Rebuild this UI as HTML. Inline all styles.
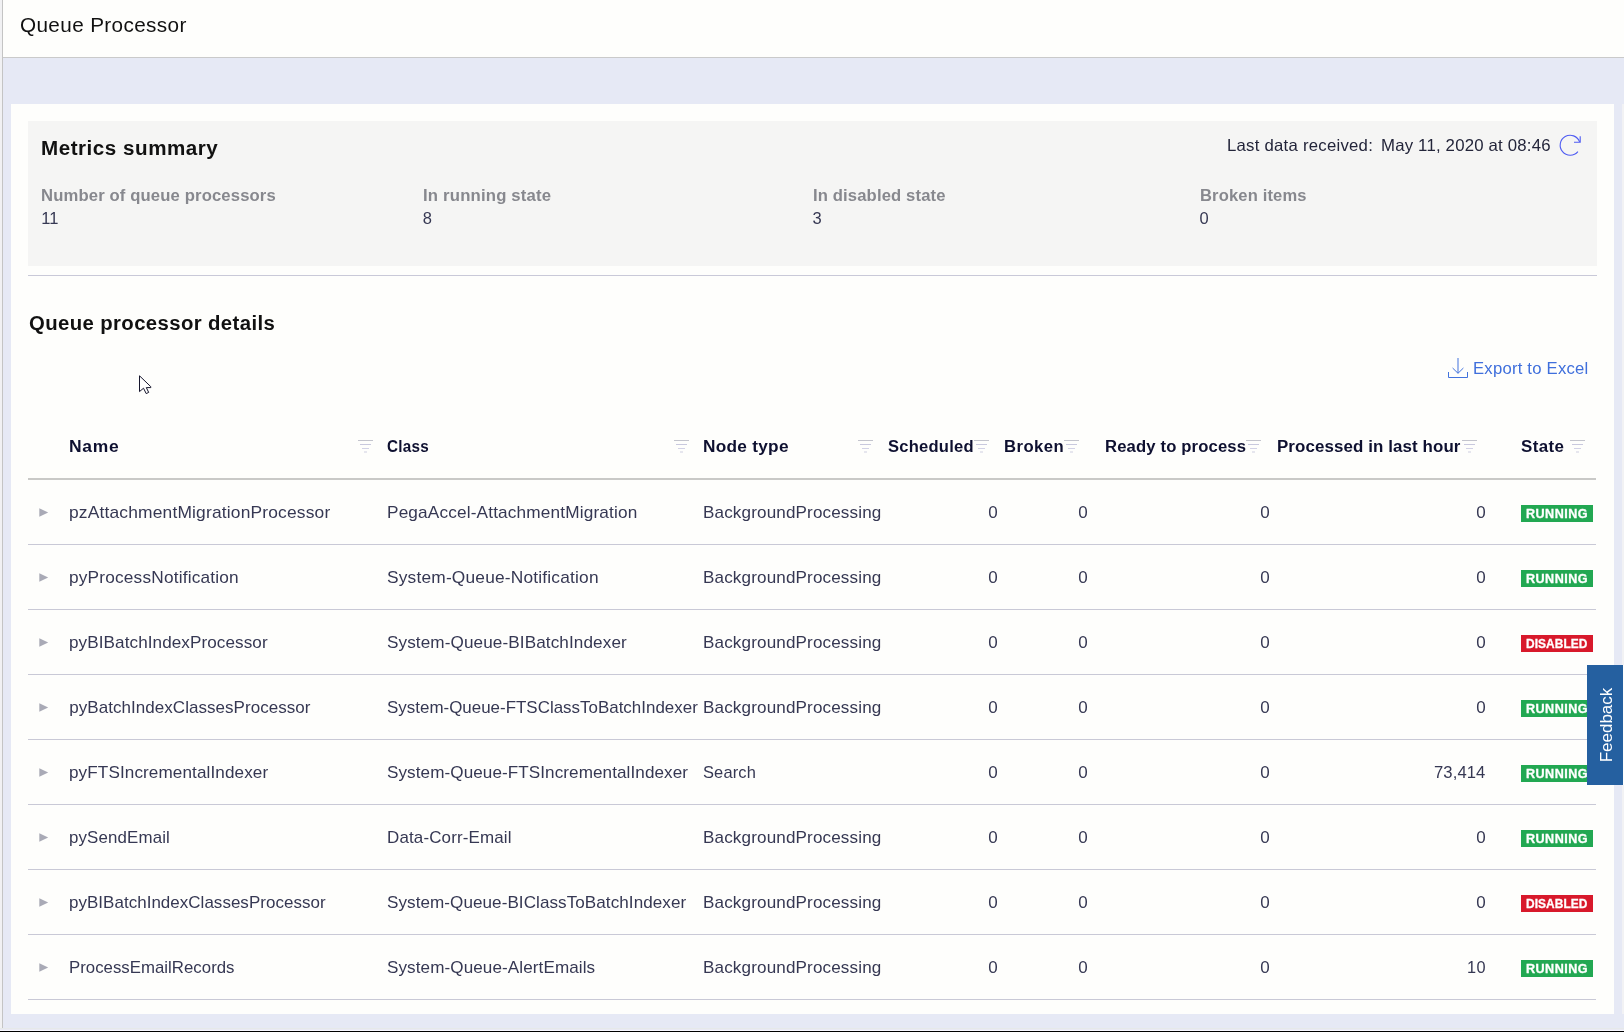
<!DOCTYPE html>
<html><head><meta charset="utf-8"><title>Queue Processor</title>
<style>
html,body{margin:0;padding:0}
body{width:1624px;height:1032px;overflow:hidden;position:relative;background:#e6e9f5;font-family:"Liberation Sans", sans-serif;}
#w{position:absolute;left:0;top:0;width:1624px;height:1032px;will-change:transform}
.abs,.t,.f,.rl,.ar,.b{position:absolute}
.t{white-space:pre;line-height:1;transform-origin:0 0}
.f{height:1px}
.rl{left:28px;width:1568px;height:1px;background:#c9c9d6}
.ar{left:39.3px}
.b{left:1521px;width:72px;height:17px;}
.b span{position:absolute;left:0;width:72px;text-align:center;top:3.2px;font-size:12px;line-height:1;font-weight:700;color:#fff;letter-spacing:0.55px;text-indent:0.55px}
</style></head><body>
<div id="w">
<div class="abs" style="left:0;top:0;width:2px;height:1032px;background:#f1f1f3"></div>
<div class="abs" style="left:2px;top:0;width:1px;height:1032px;background:#c4c4c4"></div>
<div class="abs" style="left:3px;top:0;width:1621px;height:57px;background:#fefefc"></div>
<div class="abs" style="left:3px;top:57px;width:1621px;height:1px;background:#cacaca"></div>
<div class="abs" style="left:11px;top:104px;width:1603px;height:910px;background:#fefefc"></div>
<div class="abs" style="left:1622px;top:104px;width:2px;height:910px;background:#f2f2f4"></div>
<div class="abs" style="left:28px;top:121px;width:1569px;height:145px;background:#f5f5f4"></div>
<div class="abs" style="left:28px;top:275px;width:1569px;height:1px;background:#c9c9d8"></div>
<div class="abs" style="left:28px;top:478px;width:1568px;height:2px;background:#c9c9c7"></div>
<div class="rl" style="top:544px"></div><div class="rl" style="top:609px"></div><div class="rl" style="top:674px"></div><div class="rl" style="top:739px"></div><div class="rl" style="top:804px"></div><div class="rl" style="top:869px"></div><div class="rl" style="top:934px"></div><div class="rl" style="top:999px"></div>
<div class="f" style="left:358px;top:440px;width:15px;background:#c3c4cd"></div><div class="f" style="left:360px;top:444px;width:11px;background:#c9c9de"></div><div class="f" style="left:362px;top:448px;width:7px;background:#d2d2e6"></div><div class="f" style="left:364px;top:451px;width:3px;height:2px;background:#e6e6ee"></div><div class="f" style="left:674px;top:440px;width:15px;background:#c3c4cd"></div><div class="f" style="left:676px;top:444px;width:11px;background:#c9c9de"></div><div class="f" style="left:678px;top:448px;width:7px;background:#d2d2e6"></div><div class="f" style="left:680px;top:451px;width:3px;height:2px;background:#e6e6ee"></div><div class="f" style="left:858px;top:440px;width:15px;background:#c3c4cd"></div><div class="f" style="left:860px;top:444px;width:11px;background:#c9c9de"></div><div class="f" style="left:862px;top:448px;width:7px;background:#d2d2e6"></div><div class="f" style="left:864px;top:451px;width:3px;height:2px;background:#e6e6ee"></div><div class="f" style="left:974px;top:440px;width:15px;background:#c3c4cd"></div><div class="f" style="left:976px;top:444px;width:11px;background:#c9c9de"></div><div class="f" style="left:978px;top:448px;width:7px;background:#d2d2e6"></div><div class="f" style="left:980px;top:451px;width:3px;height:2px;background:#e6e6ee"></div><div class="f" style="left:1064px;top:440px;width:15px;background:#c3c4cd"></div><div class="f" style="left:1066px;top:444px;width:11px;background:#c9c9de"></div><div class="f" style="left:1068px;top:448px;width:7px;background:#d2d2e6"></div><div class="f" style="left:1070px;top:451px;width:3px;height:2px;background:#e6e6ee"></div><div class="f" style="left:1246px;top:440px;width:15px;background:#c3c4cd"></div><div class="f" style="left:1248px;top:444px;width:11px;background:#c9c9de"></div><div class="f" style="left:1250px;top:448px;width:7px;background:#d2d2e6"></div><div class="f" style="left:1252px;top:451px;width:3px;height:2px;background:#e6e6ee"></div><div class="f" style="left:1462px;top:440px;width:15px;background:#c3c4cd"></div><div class="f" style="left:1464px;top:444px;width:11px;background:#c9c9de"></div><div class="f" style="left:1466px;top:448px;width:7px;background:#d2d2e6"></div><div class="f" style="left:1468px;top:451px;width:3px;height:2px;background:#e6e6ee"></div><div class="f" style="left:1570px;top:440px;width:15px;background:#c3c4cd"></div><div class="f" style="left:1572px;top:444px;width:11px;background:#c9c9de"></div><div class="f" style="left:1574px;top:448px;width:7px;background:#d2d2e6"></div><div class="f" style="left:1576px;top:451px;width:3px;height:2px;background:#e6e6ee"></div>
<svg class="ar" style="top:508.0px" width="10" height="10" viewBox="0 0 10 10"><path d="M0.3,0.3 L9.2,4.5 L0.3,8.7 Z" fill="#a9aab6"/></svg><svg class="ar" style="top:573.0px" width="10" height="10" viewBox="0 0 10 10"><path d="M0.3,0.3 L9.2,4.5 L0.3,8.7 Z" fill="#a9aab6"/></svg><svg class="ar" style="top:638.0px" width="10" height="10" viewBox="0 0 10 10"><path d="M0.3,0.3 L9.2,4.5 L0.3,8.7 Z" fill="#a9aab6"/></svg><svg class="ar" style="top:703.0px" width="10" height="10" viewBox="0 0 10 10"><path d="M0.3,0.3 L9.2,4.5 L0.3,8.7 Z" fill="#a9aab6"/></svg><svg class="ar" style="top:768.0px" width="10" height="10" viewBox="0 0 10 10"><path d="M0.3,0.3 L9.2,4.5 L0.3,8.7 Z" fill="#a9aab6"/></svg><svg class="ar" style="top:833.0px" width="10" height="10" viewBox="0 0 10 10"><path d="M0.3,0.3 L9.2,4.5 L0.3,8.7 Z" fill="#a9aab6"/></svg><svg class="ar" style="top:898.0px" width="10" height="10" viewBox="0 0 10 10"><path d="M0.3,0.3 L9.2,4.5 L0.3,8.7 Z" fill="#a9aab6"/></svg><svg class="ar" style="top:963.0px" width="10" height="10" viewBox="0 0 10 10"><path d="M0.3,0.3 L9.2,4.5 L0.3,8.7 Z" fill="#a9aab6"/></svg>
<div class="b" style="top:505px;background:#22a852"></div><div class="b" style="top:570px;background:#22a852"></div><div class="b" style="top:635px;background:#d8192b"></div><div class="b" style="top:700px;background:#22a852"></div><div class="b" style="top:765px;background:#22a852"></div><div class="b" style="top:830px;background:#22a852"></div><div class="b" style="top:895px;background:#d8192b"></div><div class="b" style="top:960px;background:#22a852"></div>
<div class="t" style="left:20.00px;top:15px;font-size:20px;color:#111111;letter-spacing:0.348px;transform:scaleX(1.0361);">Queue Processor</div><div class="t" style="left:40.79px;top:139px;font-size:19.5px;color:#111111;font-weight:700;letter-spacing:0.497px;transform:scaleX(1.0564);">Metrics summary</div><div class="t" style="left:1226.68px;top:137px;font-size:16.5px;color:#23253a;letter-spacing:0.235px;transform:scaleX(1.0150);">Last data received:</div><div class="t" style="left:1381.18px;top:137px;font-size:16.5px;color:#23253a;letter-spacing:0.186px;transform:scaleX(1.0170);">May 11, 2020 at 08:46</div><div class="t" style="left:41.30px;top:187px;font-size:16.5px;color:#87888e;font-weight:700;letter-spacing:0.127px;transform:scaleX(1.0101);">Number of queue processors</div><div class="t" style="left:41.34px;top:210px;font-size:16.5px;color:#363853;">11</div><div class="t" style="left:423.10px;top:187px;font-size:16.5px;color:#87888e;font-weight:700;letter-spacing:0.175px;transform:scaleX(1.0138);">In running state</div><div class="t" style="left:422.81px;top:210px;font-size:16.5px;color:#363853;">8</div><div class="t" style="left:813.30px;top:187px;font-size:16.5px;color:#87888e;font-weight:700;letter-spacing:0.136px;transform:scaleX(1.0074);">In disabled state</div><div class="t" style="left:812.62px;top:210px;font-size:16.5px;color:#363853;">3</div><div class="t" style="left:1199.70px;top:187px;font-size:16.5px;color:#87888e;font-weight:700;letter-spacing:0.160px;transform:scaleX(1.0020);">Broken items</div><div class="t" style="left:1199.60px;top:210px;font-size:16.5px;color:#363853;">0</div><div class="t" style="left:28.50px;top:314px;font-size:19.5px;color:#111111;font-weight:700;letter-spacing:0.363px;transform:scaleX(1.0433);">Queue processor details</div><div class="t" style="left:1473.29px;top:360px;font-size:16.5px;color:#3f6fdc;letter-spacing:0.214px;transform:scaleX(1.0110);">Export to Excel</div><div class="t" style="left:69.00px;top:439px;font-size:16px;color:#0e1030;font-weight:700;letter-spacing:0.642px;transform:scaleX(1.0913);">Name</div><div class="t" style="left:387.36px;top:439px;font-size:16px;color:#0e1030;font-weight:700;letter-spacing:0.284px;transform:scaleX(0.9515);">Class</div><div class="t" style="left:703.10px;top:439px;font-size:16px;color:#0e1030;font-weight:700;letter-spacing:0.250px;transform:scaleX(1.0775);">Node type</div><div class="t" style="left:887.60px;top:439px;font-size:16px;color:#0e1030;font-weight:700;letter-spacing:0.228px;transform:scaleX(1.0344);">Scheduled</div><div class="t" style="left:1003.50px;top:439px;font-size:16px;color:#0e1030;font-weight:700;letter-spacing:0.429px;transform:scaleX(1.0420);">Broken</div><div class="t" style="left:1104.50px;top:439px;font-size:16px;color:#0e1030;font-weight:700;letter-spacing:0.144px;transform:scaleX(1.0405);">Ready to process</div><div class="t" style="left:1277.20px;top:439px;font-size:16px;color:#0e1030;font-weight:700;letter-spacing:0.098px;transform:scaleX(1.0561);">Processed in last hour</div><div class="t" style="left:1521.08px;top:439px;font-size:16px;color:#0e1030;font-weight:700;letter-spacing:0.381px;transform:scaleX(1.0569);">State</div><div class="t" style="left:69.30px;top:504px;font-size:17px;color:#363853;letter-spacing:0.170px;transform:scaleX(1.0230);">pzAttachmentMigrationProcessor</div><div class="t" style="left:387.24px;top:504px;font-size:17px;color:#363853;letter-spacing:0.153px;transform:scaleX(1.0127);">PegaAccel-AttachmentMigration</div><div class="t" style="left:703.25px;top:504px;font-size:17px;color:#363853;letter-spacing:0.145px;transform:scaleX(1.0040);">BackgroundProcessing</div><div class="t" style="left:988.17px;top:504px;font-size:17px;color:#363853;">0</div><div class="t" style="left:1078.17px;top:504px;font-size:17px;color:#363853;">0</div><div class="t" style="left:1260.37px;top:504px;font-size:17px;color:#363853;">0</div><div class="t" style="left:1476.37px;top:504px;font-size:17px;color:#363853;">0</div><div class="t" style="left:1526.14px;top:508px;font-size:12px;color:#ffffff;font-weight:700;letter-spacing:0.443px;transform:scaleX(1.0493);-webkit-text-stroke:0.3px #fff;">RUNNING</div><div class="t" style="left:69.30px;top:569px;font-size:17px;color:#363853;letter-spacing:0.182px;transform:scaleX(1.0155);">pyProcessNotification</div><div class="t" style="left:386.50px;top:569px;font-size:17px;color:#363853;letter-spacing:0.184px;transform:scaleX(1.0191);">System-Queue-Notification</div><div class="t" style="left:703.25px;top:569px;font-size:17px;color:#363853;letter-spacing:0.145px;transform:scaleX(1.0040);">BackgroundProcessing</div><div class="t" style="left:988.17px;top:569px;font-size:17px;color:#363853;">0</div><div class="t" style="left:1078.17px;top:569px;font-size:17px;color:#363853;">0</div><div class="t" style="left:1260.37px;top:569px;font-size:17px;color:#363853;">0</div><div class="t" style="left:1476.37px;top:569px;font-size:17px;color:#363853;">0</div><div class="t" style="left:1526.14px;top:573px;font-size:12px;color:#ffffff;font-weight:700;letter-spacing:0.443px;transform:scaleX(1.0493);-webkit-text-stroke:0.3px #fff;">RUNNING</div><div class="t" style="left:69.30px;top:634px;font-size:17px;color:#363853;letter-spacing:0.087px;transform:scaleX(1.0058);">pyBIBatchIndexProcessor</div><div class="t" style="left:386.50px;top:634px;font-size:17px;color:#363853;letter-spacing:0.097px;transform:scaleX(1.0082);">System-Queue-BIBatchIndexer</div><div class="t" style="left:703.25px;top:634px;font-size:17px;color:#363853;letter-spacing:0.145px;transform:scaleX(1.0040);">BackgroundProcessing</div><div class="t" style="left:988.17px;top:634px;font-size:17px;color:#363853;">0</div><div class="t" style="left:1078.17px;top:634px;font-size:17px;color:#363853;">0</div><div class="t" style="left:1260.37px;top:634px;font-size:17px;color:#363853;">0</div><div class="t" style="left:1476.37px;top:634px;font-size:17px;color:#363853;">0</div><div class="t" style="left:1526.17px;top:638px;font-size:12px;color:#ffffff;font-weight:700;letter-spacing:0.074px;transform:scaleX(0.9927);-webkit-text-stroke:0.3px #fff;">DISABLED</div><div class="t" style="left:69.30px;top:699px;font-size:17px;color:#363853;letter-spacing:0.044px;">pyBatchIndexClassesProcessor</div><div class="t" style="left:386.50px;top:699px;font-size:17px;color:#363853;letter-spacing:0.009px;transform:scaleX(0.9958);">System-Queue-FTSClassToBatchIndexer</div><div class="t" style="left:703.25px;top:699px;font-size:17px;color:#363853;letter-spacing:0.145px;transform:scaleX(1.0040);">BackgroundProcessing</div><div class="t" style="left:988.17px;top:699px;font-size:17px;color:#363853;">0</div><div class="t" style="left:1078.17px;top:699px;font-size:17px;color:#363853;">0</div><div class="t" style="left:1260.37px;top:699px;font-size:17px;color:#363853;">0</div><div class="t" style="left:1476.37px;top:699px;font-size:17px;color:#363853;">0</div><div class="t" style="left:1526.14px;top:703px;font-size:12px;color:#ffffff;font-weight:700;letter-spacing:0.443px;transform:scaleX(1.0493);-webkit-text-stroke:0.3px #fff;">RUNNING</div><div class="t" style="left:69.30px;top:764px;font-size:17px;color:#363853;letter-spacing:0.098px;transform:scaleX(1.0071);">pyFTSIncrementalIndexer</div><div class="t" style="left:386.50px;top:764px;font-size:17px;color:#363853;letter-spacing:0.075px;transform:scaleX(1.0061);">System-Queue-FTSIncrementalIndexer</div><div class="t" style="left:702.50px;top:764px;font-size:17px;color:#363853;letter-spacing:0.134px;transform:scaleX(0.9680);">Search</div><div class="t" style="left:988.17px;top:764px;font-size:17px;color:#363853;">0</div><div class="t" style="left:1078.17px;top:764px;font-size:17px;color:#363853;">0</div><div class="t" style="left:1260.37px;top:764px;font-size:17px;color:#363853;">0</div><div class="t" style="left:1434.30px;top:764px;font-size:17px;color:#363853;letter-spacing:0.094px;transform:scaleX(0.9781);">73,414</div><div class="t" style="left:1526.14px;top:768px;font-size:12px;color:#ffffff;font-weight:700;letter-spacing:0.443px;transform:scaleX(1.0493);-webkit-text-stroke:0.3px #fff;">RUNNING</div><div class="t" style="left:69.30px;top:829px;font-size:17px;color:#363853;letter-spacing:0.149px;transform:scaleX(0.9918);">pySendEmail</div><div class="t" style="left:387.26px;top:829px;font-size:17px;color:#363853;letter-spacing:0.142px;transform:scaleX(0.9981);">Data-Corr-Email</div><div class="t" style="left:703.25px;top:829px;font-size:17px;color:#363853;letter-spacing:0.145px;transform:scaleX(1.0040);">BackgroundProcessing</div><div class="t" style="left:988.17px;top:829px;font-size:17px;color:#363853;">0</div><div class="t" style="left:1078.17px;top:829px;font-size:17px;color:#363853;">0</div><div class="t" style="left:1260.37px;top:829px;font-size:17px;color:#363853;">0</div><div class="t" style="left:1476.37px;top:829px;font-size:17px;color:#363853;">0</div><div class="t" style="left:1526.14px;top:833px;font-size:12px;color:#ffffff;font-weight:700;letter-spacing:0.443px;transform:scaleX(1.0493);-webkit-text-stroke:0.3px #fff;">RUNNING</div><div class="t" style="left:69.30px;top:894px;font-size:17px;color:#363853;letter-spacing:0.034px;transform:scaleX(0.9980);">pyBIBatchIndexClassesProcessor</div><div class="t" style="left:386.50px;top:894px;font-size:17px;color:#363853;letter-spacing:0.063px;transform:scaleX(1.0046);">System-Queue-BIClassToBatchIndexer</div><div class="t" style="left:703.25px;top:894px;font-size:17px;color:#363853;letter-spacing:0.145px;transform:scaleX(1.0040);">BackgroundProcessing</div><div class="t" style="left:988.17px;top:894px;font-size:17px;color:#363853;">0</div><div class="t" style="left:1078.17px;top:894px;font-size:17px;color:#363853;">0</div><div class="t" style="left:1260.37px;top:894px;font-size:17px;color:#363853;">0</div><div class="t" style="left:1476.37px;top:894px;font-size:17px;color:#363853;">0</div><div class="t" style="left:1526.17px;top:898px;font-size:12px;color:#ffffff;font-weight:700;letter-spacing:0.074px;transform:scaleX(0.9927);-webkit-text-stroke:0.3px #fff;">DISABLED</div><div class="t" style="left:69.26px;top:959px;font-size:17px;color:#363853;letter-spacing:0.023px;transform:scaleX(0.9873);">ProcessEmailRecords</div><div class="t" style="left:386.50px;top:959px;font-size:17px;color:#363853;letter-spacing:0.094px;transform:scaleX(1.0046);">System-Queue-AlertEmails</div><div class="t" style="left:703.25px;top:959px;font-size:17px;color:#363853;letter-spacing:0.145px;transform:scaleX(1.0040);">BackgroundProcessing</div><div class="t" style="left:988.17px;top:959px;font-size:17px;color:#363853;">0</div><div class="t" style="left:1078.17px;top:959px;font-size:17px;color:#363853;">0</div><div class="t" style="left:1260.37px;top:959px;font-size:17px;color:#363853;">0</div><div class="t" style="left:1467.07px;top:959px;font-size:17px;color:#363853;letter-spacing:0.422px;transform:scaleX(0.9600);">10</div><div class="t" style="left:1526.14px;top:963px;font-size:12px;color:#ffffff;font-weight:700;letter-spacing:0.443px;transform:scaleX(1.0493);-webkit-text-stroke:0.3px #fff;">RUNNING</div>
<svg class="abs" style="left:1556px;top:131px" width="30" height="30" viewBox="0 0 30 30" fill="none" stroke="#4f5cf2" stroke-width="1.1">
<path d="M23.6,10.9 A10,10 0 1 0 21.9,20.6"/><path d="M24.2,5.2 V11.3 H18"/></svg>
<svg class="abs" style="left:1444px;top:354px" width="28" height="28" viewBox="0 0 28 28" fill="none" stroke="#4273dd" stroke-width="1">
<path d="M4.5,18 V23.5 H23.5 V18"/><path d="M14,4 V19.2"/><path d="M8.6,14 L14,19.3 L19.4,14"/></svg>
<svg class="abs" style="left:135px;top:371px" width="22" height="28" viewBox="0 0 22 28"><path d="M4.5,4.8 V20.6 L8.5,17.2 L11.2,22.6 L13.7,21.4 L11.3,16.6 H15.8 V15.7 Z" fill="#fff" stroke="#15152c" stroke-width="1" stroke-linejoin="round"/></svg>
<div class="abs" style="left:1587px;top:665px;width:36px;height:120px;background:#2560a0"></div>
<div class="abs" style="left:1623px;top:665px;width:1px;height:120px;background:#fdfdfd"></div>
<div class="t" style="left:1587px;top:665px;width:36px;height:120px;color:#fff;font-size:17px"><div style="position:absolute;left:18.6px;top:59.5px;transform:translate(-50%,-50%) rotate(-90deg);white-space:nowrap">Feedback</div></div>
<div class="abs" style="left:0;top:1028px;width:1624px;height:1px;background:#e6e9ea"></div>
<div class="abs" style="left:0;top:1029px;width:1624px;height:1px;background:#e9e9f3"></div>
<div class="abs" style="left:0;top:1030px;width:1624px;height:1px;background:#f8f8ff"></div>
<div class="abs" style="left:0;top:1031px;width:1624px;height:1px;background:#000"></div>
</div>
</body></html>
